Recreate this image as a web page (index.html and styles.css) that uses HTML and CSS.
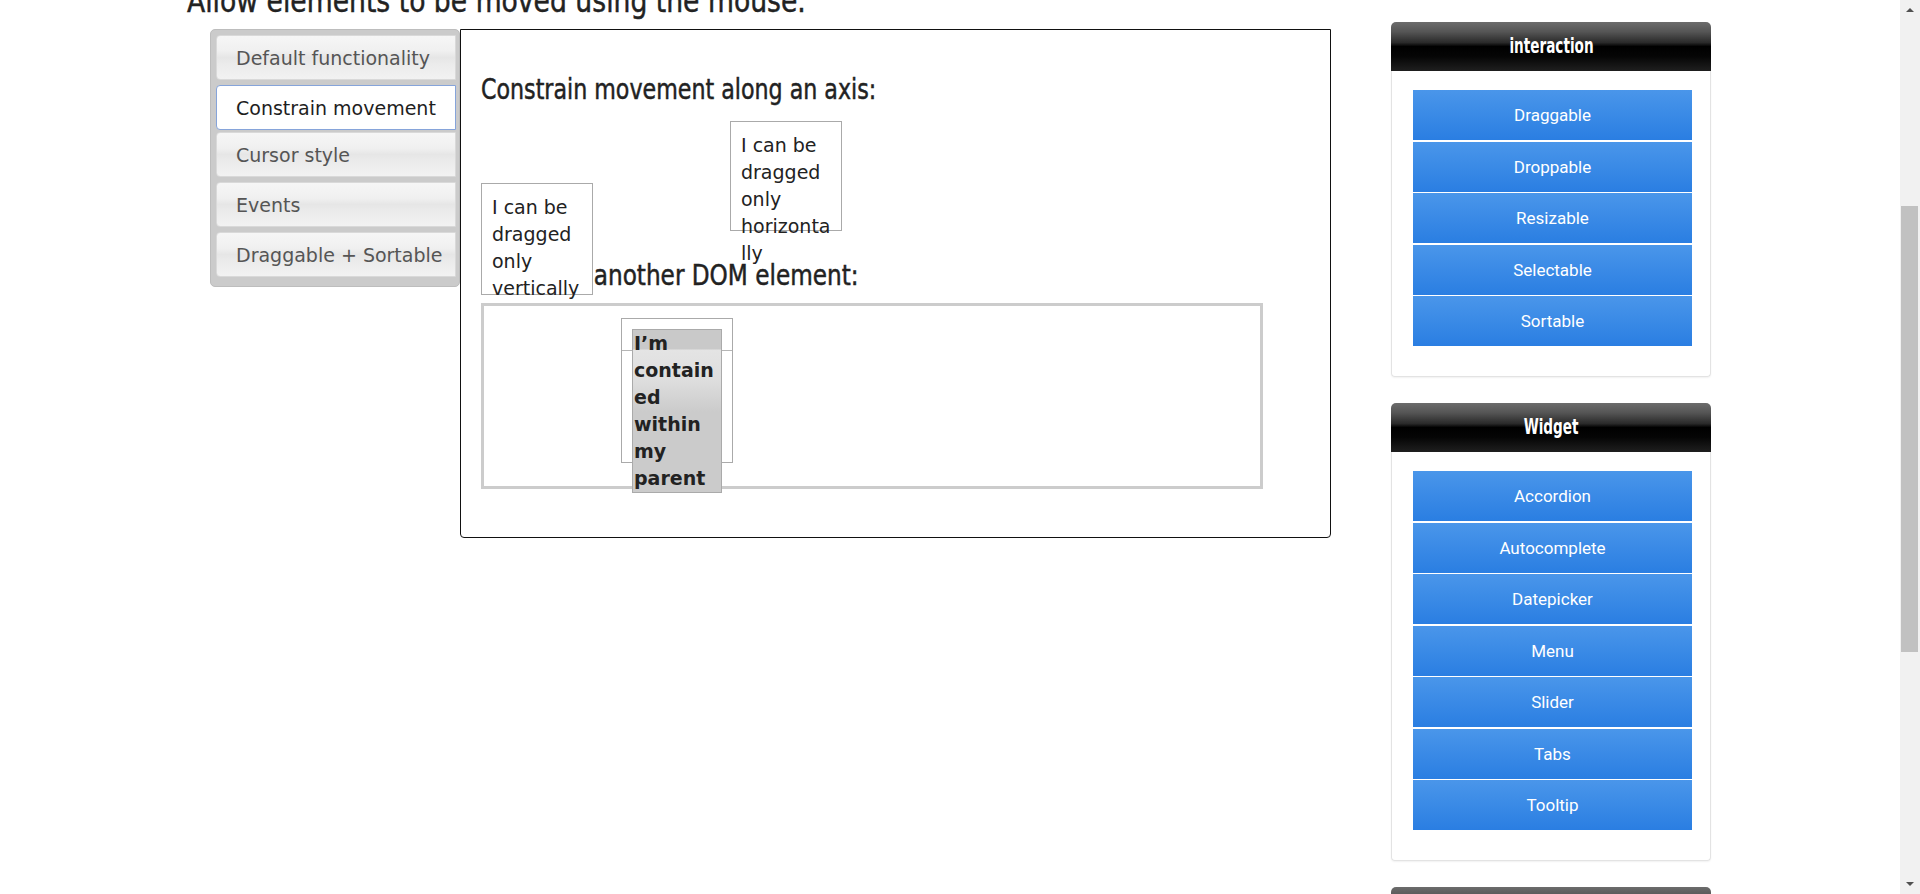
FILE: index.html
```html
<!DOCTYPE html>
<html lang="en">
<head>
<meta charset="utf-8">
<title>Draggable - Constrain movement</title>
<link rel="stylesheet" href="styles.css">
</head>
<body>
<div class="viewport">
  <div class="page">
    <main class="main">
      <h1 class="page-title">Allow elements to be moved using the mouse.</h1>
      <div class="demo">
        <ul class="tabs">
          <li class="tab">Default functionality</li>
          <li class="tab active">Constrain movement</li>
          <li class="tab">Cursor style</li>
          <li class="tab">Events</li>
          <li class="tab">Draggable + Sortable</li>
        </ul>
        <section class="panel">
          <h3 class="demo-title">Constrain movement along an axis:</h3>
          <div class="axis-row">
            <div class="drag-box drag-vertical"><p>I can be dragged only vertically</p></div>
            <div class="drag-box drag-horizontal"><p>I can be dragged only horizontally</p></div>
          </div>
          <h3 class="demo-title second">Or within another DOM element:</h3>
          <div class="containment">
            <div class="drag-box parent-box"><p class="drag-header">I’m contained within my parent</p></div>
          </div>
        </section>
      </div>
    </main>
    <aside class="sidebar">
      <div class="widget-box">
        <div class="widget-head"><span class="widget-title">interaction</span></div>
        <div class="widget-body">
          <a class="widget-btn">Draggable</a>
          <a class="widget-btn">Droppable</a>
          <a class="widget-btn">Resizable</a>
          <a class="widget-btn">Selectable</a>
          <a class="widget-btn">Sortable</a>
        </div>
      </div>
      <div class="widget-box">
        <div class="widget-head"><span class="widget-title">Widget</span></div>
        <div class="widget-body">
          <a class="widget-btn">Accordion</a>
          <a class="widget-btn">Autocomplete</a>
          <a class="widget-btn">Datepicker</a>
          <a class="widget-btn">Menu</a>
          <a class="widget-btn">Slider</a>
          <a class="widget-btn">Tabs</a>
          <a class="widget-btn">Tooltip</a>
        </div>
      </div>
      <div class="widget-box">
        <div class="widget-head"><span class="widget-title">Effects</span></div>
      </div>
    </aside>
  </div>
  <div class="scrollbar">
    <div class="sb-btn"><span class="sb-arrow up"></span></div>
    <div class="sb-track"><div class="sb-thumb"></div></div>
    <div class="sb-btn"><span class="sb-arrow down"></span></div>
  </div>
</div>
</body>
</html>
```

FILE: styles.css
```css
* { box-sizing: border-box; }

html, body {
  margin: 0;
  padding: 0;
}

body {
  background: #fff;
  overflow: hidden;
  font-family: "DejaVu Sans", Verdana, sans-serif;
  color: #222;
}

.viewport {
  display: flex;
  height: 894px;
  overflow: hidden;
}

.page {
  flex: 1;
  display: flex;
  align-items: flex-start;
  padding-left: 187px;
  overflow: hidden;
}

.main {
  width: 1144px;
  flex: none;
}

/* condensed display headings (Oswald-like) */
.page-title,
.demo-title {
  font-family: "DejaVu Sans Condensed", "DejaVu Sans", sans-serif;
  font-weight: normal;
  color: #222;
  white-space: nowrap;
  transform-origin: 0 50%;
  -webkit-text-stroke: 0.45px #222;
}

.page-title {
  font-size: 32px;
  line-height: 36px;
  margin: -17px 0 10px;
  transform: scaleX(0.925);
}

.demo-title {
  font-size: 28px;
  line-height: 32px;
  transform: scaleX(0.88);
}

.demo-title.second {
  transform: scaleX(0.92);
}

.demo {
  display: flex;
  align-items: flex-start;
  margin-left: 23px;
}

/* vertical tabs */
.tabs {
  list-style: none;
  margin: 0;
  flex: none;
  width: 250px;
  padding: 5px 3px 9px 5px;
  background: #cbcbcb;
  border: 1px solid #bdbdbd;
  border-radius: 5px;
}

.tab {
  height: 45px;
  display: flex;
  align-items: center;
  padding-left: 19px;
  margin-bottom: 5px;
  border: 1px solid #d9d9d9;
  border-radius: 4px 0 0 4px;
  background: linear-gradient(to bottom, #f6f6f6 0%, #f0f0f0 35%, #e6e6e6 50%, #ebebeb 65%, #f2f2f2 100%);
  font-size: 19px;
  color: #555;
  white-space: nowrap;
}

.tab:last-child { margin-bottom: 0; }

.tab.active {
  background: #fff;
  border-color: #86a4da;
  color: #1e1e1e;
  margin-bottom: 2px;
}

/* demo panel */
.panel {
  flex: none;
  width: 871px;
  border: 1px solid #111;
  border-radius: 0 0 4px 4px;
  padding: 0 20px 48px;
}

.panel .demo-title {
  margin: 44px 0 15px;
}

.panel .demo-title.second {
  margin: 27px 0 11px;
}

.axis-row {
  display: flex;
  gap: 10px;
  height: 112px;
}

.drag-box {
  width: 112px;
  height: 112px;
  flex: none;
  border: 1px solid #aaa;
  background: #fff;
  padding: 10px 9px 10px 10px;
  font-size: 19px;
  line-height: 27px;
  color: #222;
  overflow-wrap: break-word;
  word-wrap: break-word;
}

.drag-box p {
  margin: 0;
}

/* dragged offsets */
.drag-vertical {
  position: relative;
  top: 62px;
  z-index: 1;
}

.drag-horizontal {
  position: relative;
  left: 127px;
  height: 110px;
}

.containment {
  width: 782px;
  height: 186px;
  border: 3px solid #ccc;
  padding: 12px 0 0 10px;
}

.parent-box {
  position: relative;
  left: 127px;
  height: 145px;
  padding: 10px;
  background: linear-gradient(to bottom, #fff 0, #fff 31px, #b5b5b5 31px, #b5b5b5 32px, #fff 32px, #fff 100%);
}

.drag-header {
  border: 1px solid #aaa;
  padding: 0 1px;
  font-weight: bold;
  color: #222;
  background: linear-gradient(to bottom, #c9c9c9 0, #c9c9c9 19px, #e4e4e4 20px, #dedede 50px, #cbcbcb 82px, #cbcbcb 100%);
}

/* sidebar */
.sidebar {
  flex: none;
  width: 320px;
  margin-left: 60px;
  padding-top: 22px;
}

.widget-box {
  margin-bottom: 26px;
}

.widget-head {
  height: 49px;
  line-height: 49px;
  text-align: center;
  color: #fff;
  border-radius: 5px 5px 0 0;
  background: linear-gradient(to bottom, #6c6c6c 0%, #555 20%, #2a2a2a 42%, #000 50%, #050505 70%, #1f1f1f 100%);
}

.widget-title {
  display: inline-block;
  font-family: "DejaVu Sans Condensed", "DejaVu Sans", sans-serif;
  font-weight: bold;
  font-size: 21px;
  transform: scaleX(0.72);
}

.widget-body {
  display: flex;
  flex-direction: column;
  gap: 1.5px;
  padding: 19px 18px 30px 21px;
  border: 1px solid #e3e3e3;
  border-top: none;
  border-radius: 0 0 4px 4px;
  box-shadow: 0 1px 2px rgba(0, 0, 0, 0.06);
}

.widget-btn {
  display: block;
  height: 50px;
  line-height: 50px;
  text-align: center;
  color: #fff;
  font-family: Roboto, "Liberation Sans", sans-serif;
  font-size: 17px;
  background: linear-gradient(to bottom, #4a96ea 0%, #3a8ae6 50%, #2a7ee2 100%);
}

/* fake browser scrollbar */
.scrollbar {
  flex: none;
  width: 20px;
  height: 894px;
  background: #f1f1f1;
  display: flex;
  flex-direction: column;
}

.sb-btn {
  height: 20px;
  display: flex;
  align-items: center;
  justify-content: center;
  flex: none;
}

.sb-arrow {
  width: 0;
  height: 0;
  border-left: 4px solid transparent;
  border-right: 4px solid transparent;
}

.sb-arrow.up { border-bottom: 4px solid #505050; }
.sb-arrow.down { border-top: 4px solid #505050; }

.sb-track {
  flex: 1;
  padding: 186px 2px 0 1px;
}

.sb-thumb {
  height: 446px;
  background: #c1c1c1;
}
```
